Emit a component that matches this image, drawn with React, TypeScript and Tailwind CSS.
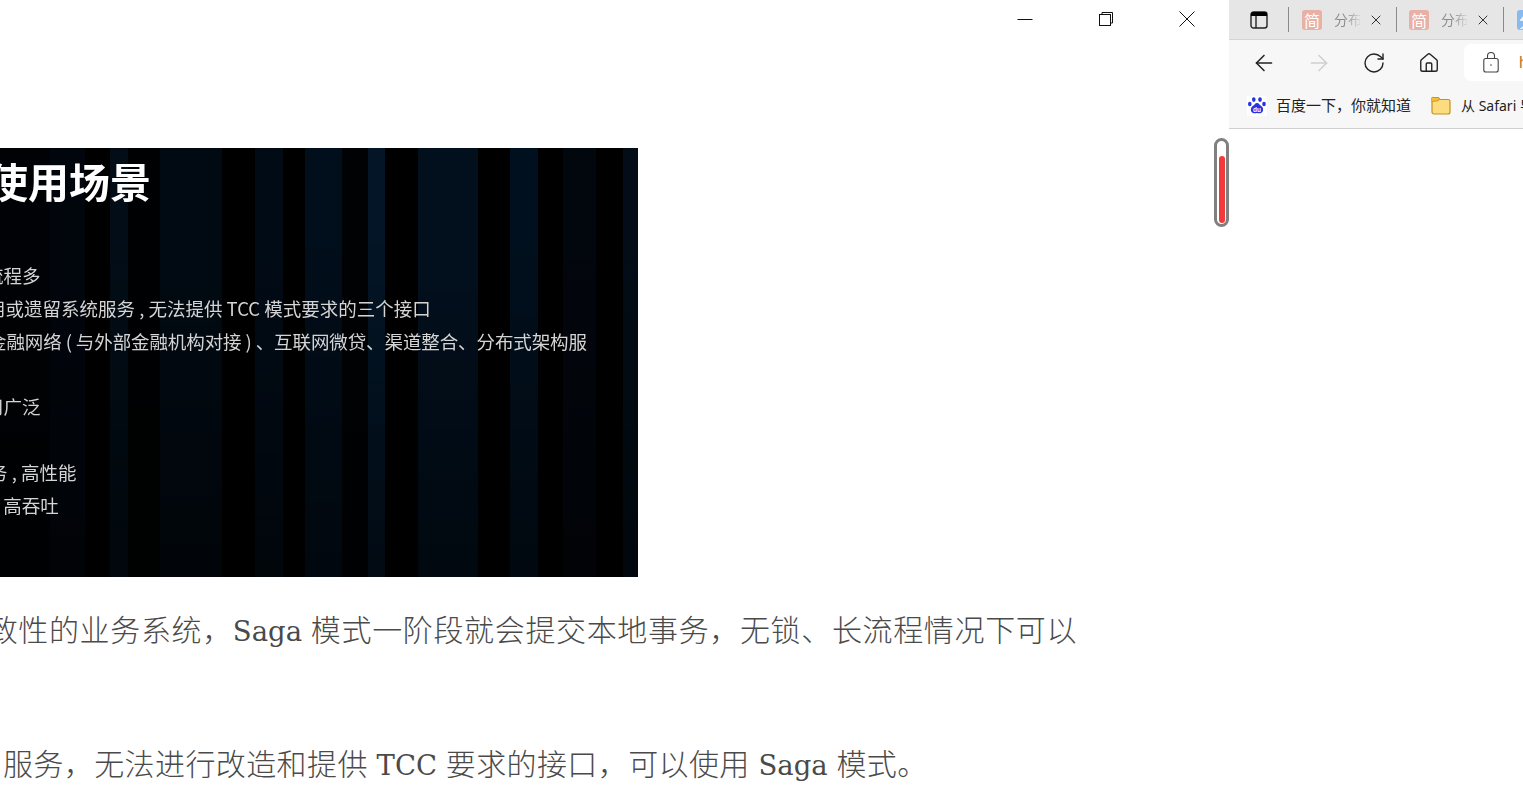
import React from "react";
import { ArrowLeft, ArrowRight, RotateCw, House, X } from "lucide-react";

const cjk = "font-['Noto_Sans_CJK_SC','Noto_Sans',sans-serif]";

const stripes = [
  "w-[50px] bg-[#000205]", "w-[35px] bg-[#01060d]", "w-[25px] bg-[#000000]", "w-[18px] bg-[#020d17]",
  "w-[32px] bg-[#000102]", "w-[62px] bg-[#010a13]", "w-[33px] bg-[#000000]", "w-[28px] bg-[#010b16]",
  "w-[22px] bg-[#000000]", "w-[37px] bg-[#010e1b]", "w-[26px] bg-[#000204]", "w-[17px] bg-[#031526]",
  "w-[33px] bg-[#000000]", "w-[60px] bg-[#02101e]", "w-[32px] bg-[#000000]", "w-[28px] bg-[#01101e]",
  "w-[25px] bg-[#000000]", "w-[33px] bg-[#02060d]", "w-[27px] bg-[#000000]", "w-[15px] bg-[#020d17]",
];

function SlideRow({ text, className }: { text: string; className: string }) {
  return <div className={`h-[33px] leading-[33px] whitespace-nowrap text-[18.5px] text-[#d4d4d4] ${className}`}>{text}</div>;
}

function Slide() {
  return (
    <div className="relative w-[638px] h-[429px] overflow-hidden">
      <div className="flex h-full">
        {stripes.map((s, i) => (
          <div key={i} className={`${s} shrink-0 h-full`} />
        ))}
      </div>
      <div className="absolute inset-0 bg-gradient-to-b from-transparent from-20% to-black/50" />
      <div className={`absolute inset-0 flex flex-col ${cjk} blur-[0.4px]`}>
        <div className="h-[111px] pt-[3px] -ml-[13px] text-[41px] leading-[58px] font-bold text-white whitespace-nowrap">使用场景</div>
        <SlideRow text="流程多" className="-ml-[15px]" />
        <SlideRow text="用或遗留系统服务 , 无法提供 TCC 模式要求的三个接口" className="-ml-[13px]" />
        <SlideRow text="金融网络 ( 与外部金融机构对接 ) 、互联网微贷、渠道整合、分布式架构服" className="-ml-[12px] tracking-[-0.1px]" />
        <div className="h-[32px]" />
        <SlideRow text="用广泛" className="-ml-[15px]" />
        <div className="h-[33px]" />
        <SlideRow text="务 , 高性能" className="-ml-[11px]" />
        <SlideRow text=", 高吞吐" className="-ml-[6px]" />
      </div>
    </div>
  );
}

function WindowButton({ children }: { children: React.ReactNode }) {
  return <div className="w-[81px] h-[39px] flex justify-center pt-[11px]">{children}</div>;
}

function WindowControls() {
  return (
    <div className="h-[39px] flex justify-end pr-[2px]">
      <WindowButton>
        <svg width="16" height="16" viewBox="0 0 16 16"><path d="M0.5 8.5h15" stroke="#111" strokeWidth="1" /></svg>
      </WindowButton>
      <WindowButton>
        <svg width="16" height="16" viewBox="0 0 16 16" fill="none" stroke="#111" strokeWidth="1">
          <rect x="1.5" y="3.5" width="11" height="11" />
          <path d="M4 3.5V1.500h10.500V12H12.500" />
        </svg>
      </WindowButton>
      <WindowButton>
        <svg width="16" height="16" viewBox="0 0 16 16" stroke="#111" strokeWidth="1"><path d="M0.5 0.5l15 15M15.500 0.5l-15 15" /></svg>
      </WindowButton>
    </div>
  );
}

function Favicon({ color, ch }: { color: string; ch: string }) {
  return (
    <div className={`w-5 h-5 rounded-[3px] shrink-0 flex items-center justify-center text-white text-[16px] leading-none ${color} ${cjk}`}>{ch}</div>
  );
}

function Sep() {
  return <div className="w-[1px] h-[25px] bg-[#8a8a8a] shrink-0" />;
}

function Tab() {
  return (
    <div className="flex items-center shrink-0">
      <Favicon color="bg-[#e9b0a5]" ch="简" />
      <div className={`ml-[12px] w-[26px] overflow-hidden whitespace-nowrap text-[14px] text-transparent bg-gradient-to-r from-[#8a8a8a] from-40% to-[#d8d8d8] bg-clip-text ${cjk}`}>分布式</div>
      <X className="ml-[8px] w-4 h-4 text-[#333] shrink-0" strokeWidth={1.5} />
    </div>
  );
}

function BrowserChrome() {
  return (
    <div className="w-[294px] shrink-0 overflow-hidden bg-white">
      <div className="h-[40px] bg-[#e6e6e6] border-b border-[#d4d4d4] flex items-center pl-[21px] overflow-hidden">
        <svg width="18" height="18" viewBox="0 0 18 18" className="shrink-0" fill="none">
          <rect x="1" y="1" width="16" height="16" rx="2.500" stroke="#222" strokeWidth="1.400" />
          <path d="M1 3.500A2.500 2.500 0 0 1 3.500 1h11A2.500 2.500 0 0 1 17 3.500V5H1z" fill="#000" />
          <path d="M6 5v12" stroke="#222" strokeWidth="1.400" />
        </svg>
        <div className="ml-[20px]"><Sep /></div>
        <div className="ml-[13px]"><Tab /></div>
        <div className="ml-[12px]"><Sep /></div>
        <div className="ml-[12px]"><Tab /></div>
        <div className="ml-[12px]"><Sep /></div>
        <div className="ml-[13px]"><Favicon color="bg-[#8ab8f0]" ch="分" /></div>
      </div>
      <div className="h-[45px] bg-[#f7f7f7] flex items-center pl-[22px] overflow-hidden">
        <ArrowLeft className="w-[26px] h-[26px] text-[#222] shrink-0" strokeWidth={1.4} />
        <ArrowRight className="ml-[29px] w-[26px] h-[26px] text-[#cfcfcf] shrink-0" strokeWidth={1.4} />
        <RotateCw className="ml-[30px] w-[24px] h-[24px] text-[#222] shrink-0" strokeWidth={1.4} />
        <House className="ml-[32px] w-[22px] h-[22px] text-[#222] shrink-0" strokeWidth={1.5} />
        <div className="ml-[24px] h-[37px] w-[80px] shrink-0 bg-white rounded-l-[7px] flex items-center pl-[19px]">
          <svg width="16" height="21" viewBox="0 0 16 21" fill="none" stroke="#444" strokeWidth="1.100" className="shrink-0">
            <rect x="0.8" y="6.500" width="14.400" height="13.500" rx="2" />
            <path d="M4.500 6.500V4a3.500 3.500 0 0 1 7 0v2.500" />
            <circle cx="8" cy="13" r="0.8" fill="#444" stroke="none" />
          </svg>
          <span className="ml-[20px] text-[16px] text-[#b5762a] font-['Liberation_Sans',sans-serif]">h</span>
        </div>
      </div>
      <div className="h-[44px] bg-[#f7f7f7] border-b border-[#d0d0d0] flex items-center pl-[18px] pb-[2px] overflow-hidden">
        <svg width="20" height="20" viewBox="0 0 20 20" className="shrink-0 bg-white" fill="#2932e1">
          <ellipse cx="6.800" cy="3.600" rx="1.800" ry="2.400" />
          <ellipse cx="13" cy="3.600" rx="1.800" ry="2.400" />
          <ellipse cx="2.800" cy="8" rx="1.800" ry="2.300" />
          <ellipse cx="17" cy="8" rx="1.800" ry="2.300" />
          <path d="M10 7c2 0 2.500 2 4.500 3.300 2.500 1.700 2.200 6.800-1.700 7-1.200.1-1.800-.4-2.800-.4s-1.600.5-2.800.4c-3.900-.2-4.200-5.300-1.700-7C7.500 9 8 7 10 7z" />
          <text x="10" y="16.300" textAnchor="middle" fontSize="6.500" fontWeight="700" fill="#fff" fontFamily="Liberation Sans">du</text>
        </svg>
        <span className={`ml-[9px] text-[15px] text-[#222] whitespace-nowrap ${cjk}`}>百度一下，你就知道</span>
        <svg width="20" height="19" viewBox="0 0 20 19" className="ml-[20px] shrink-0">
          <path d="M1 3.500A2 2 0 0 1 3 1.500h4l2 2h8a2 2 0 0 1 2 2V16a2 2 0 0 1-2 2H3a2 2 0 0 1-2-2z" fill="#fddc80" stroke="#c0941f" strokeWidth="1.200" />
          <path d="M1 5.500A2 2 0 0 1 3 1.500h4c1 0 1.500 1.500 1 2.500-.5 1-1.500 1-3 1z" fill="#f3bd36" stroke="#c0941f" strokeWidth="0.800" />
        </svg>
        <span className={`ml-[10px] text-[14px] text-[#222] whitespace-nowrap font-['Noto_Sans','Noto_Sans_CJK_SC',sans-serif]`}>从 Safari 导入</span>
      </div>
    </div>
  );
}

function Latin({ children }: { children: React.ReactNode }) {
  return <span className="text-[27.5px] tracking-normal font-normal font-['DejaVu_Serif',serif]">{children}</span>;
}

export default function App() {
  const para = `text-[30px] leading-[44px] font-light text-[#4a4a4a] whitespace-nowrap ${cjk}`;
  return (
    <div className="flex w-[1523px] h-[802px] overflow-hidden bg-white relative">
      <div className="w-[1229px] shrink-0 overflow-hidden">
        <WindowControls />
        <div className="mt-[109px]"><Slide /></div>
        <p className={`${para} tracking-[0.65px] mt-[29px] -ml-[43px]`}>
          一致性的业务系统，<Latin>Saga </Latin>模式一阶段就会提交本地事务，无锁、长流程情况下可以
        </p>
        <p className={`${para} tracking-[0.4px] mt-[87px] ml-[3px]`}>
          服务，无法进行改造和提供<Latin> TCC </Latin>要求的接口，可以使用<Latin> Saga </Latin>模式。
        </p>
      </div>
      <BrowserChrome />
      <div className="absolute left-[1214px] top-[138px] w-[15px] h-[89px] rounded-full border-[3px] border-[#808080] bg-white flex items-end justify-center pb-[1px]">
        <div className="w-[6px] h-[67px] rounded-full bg-[#f23a3a]" />
      </div>
    </div>
  );
}
